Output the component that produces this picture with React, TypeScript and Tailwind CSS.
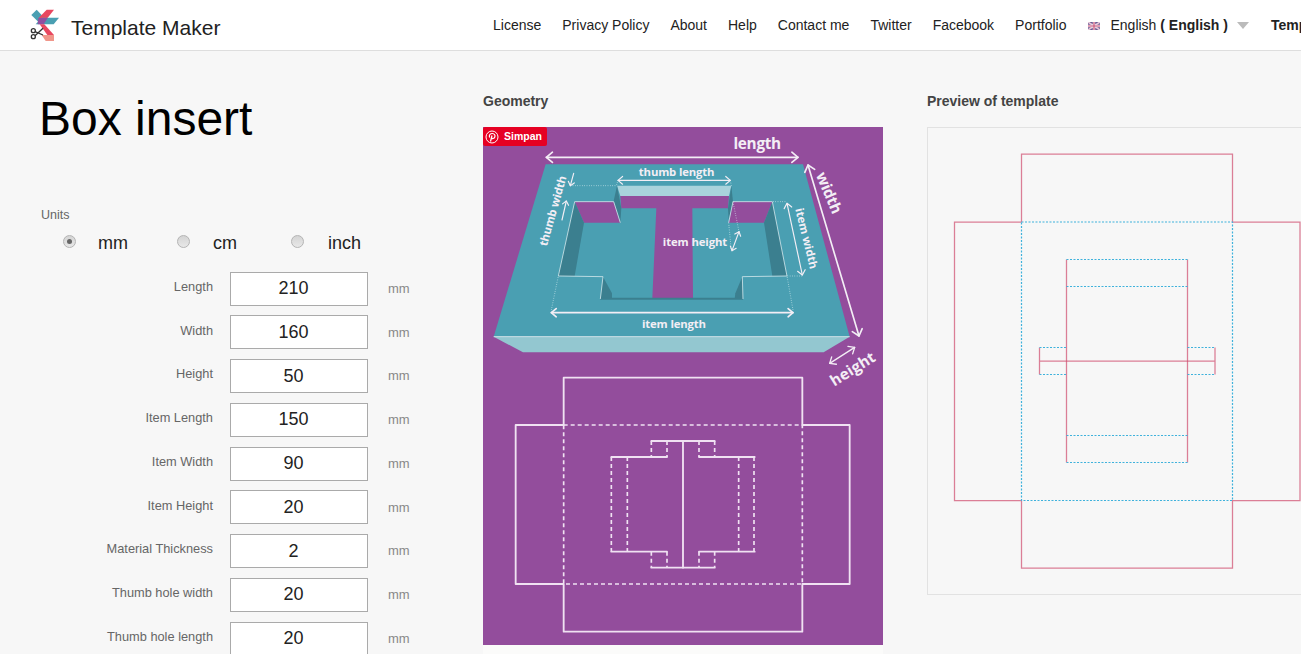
import React from "react";

const nav = ["License", "Privacy Policy", "About", "Help", "Contact me", "Twitter", "Facebook", "Portfolio"];
const fields: [string, string][] = [
  ["Length", "210"],
  ["Width", "160"],
  ["Height", "50"],
  ["Item Length", "150"],
  ["Item Width", "90"],
  ["Item Height", "20"],
  ["Material Thickness", "2"],
  ["Thumb hole width", "20"],
  ["Thumb hole length", "20"],
];

function Logo() {
  return (
    <svg width="30" height="33" viewBox="93 26 90 99" className="shrink-0">
      <polygon points="113,28 145,62 125,72 97,44" fill="#4a9fb2" />
      <polygon points="143,28 165,28 145,54 118,54" fill="#e8475f" />
      <polygon points="128,52 180,52 164,72 110,72" fill="#4a9fb2" />
      <polygon points="118,53 146,53 134,72 116,72" fill="#8f4fa0" />
      <polygon points="122,72 136,72 165,104 145,104" fill="#e8475f" />
      <polygon points="128,104 165,104 165,122 140,122" fill="#f0968a" />
      <g fill="none" stroke="#333" strokeWidth="4">
        <circle cx="103" cy="91" r="6" />
        <circle cx="103" cy="109" r="6" />
        <path d="M108 94 L132 104 M108 106 L132 84" />
      </g>
    </svg>
  );
}

function Flag() {
  return (
    <svg width="12" height="8" viewBox="0 0 12 8" className="shrink-0">
      <rect width="12" height="8" fill="#6a5a94" />
      <path d="M0 0 L12 8 M12 0 L0 8" stroke="#e8c8d8" strokeWidth="1.6" />
      <path d="M6 0 V8 M0 4 H12" stroke="#f4e4ea" strokeWidth="2.4" />
      <path d="M6 0 V8 M0 4 H12" stroke="#c8557a" strokeWidth="1.2" />
    </svg>
  );
}

function Radio({ on }: { on?: boolean }) {
  return (
    <span className="relative -top-[2px] flex size-[13px] items-center justify-center rounded-full border border-[#b4b4b4] bg-gradient-to-b from-[#d4d4d4] to-[#e8e8e8]">
      {on && <span className="size-[5px] rounded-full bg-[#666]" />}
    </span>
  );
}

function Head({ x, y, fx, fy, s }: { x: number; y: number; fx: number; fy: number; s: number }) {
  const a = Math.atan2(fy - y, fx - x);
  const l = 24 * s;
  const p1 = [x + l * Math.cos(a + 0.7), y + l * Math.sin(a + 0.7)];
  const p2 = [x + l * Math.cos(a - 0.7), y + l * Math.sin(a - 0.7)];
  return <polyline points={`${p1[0]},${p1[1]} ${x},${y} ${p2[0]},${p2[1]}`} fill="none" />;
}

function Arrow({ a, b, w = 4, s = 1, one }: { a: [number, number]; b: [number, number]; w?: number; s?: number; one?: boolean }) {
  return (
    <g stroke="#f3eef5" strokeWidth={w} strokeLinecap="round" strokeLinejoin="round">
      <line x1={a[0]} y1={a[1]} x2={b[0]} y2={b[1]} />
      <Head x={a[0]} y={a[1]} fx={b[0]} fy={b[1]} s={s} />
      {!one && <Head x={b[0]} y={b[1]} fx={a[0]} fy={a[1]} s={s} />}
    </g>
  );
}

function Label({ x, y, r = 0, size, len, children }: { x: number; y: number; r?: number; size: number; len: number; children: string }) {
  return (
    <text
      x={x}
      y={y}
      transform={r ? `rotate(${r} ${x} ${y})` : undefined}
      textAnchor="middle"
      dominantBaseline="central"
      fontFamily="'Open Sans', sans-serif"
      fontWeight="700"
      fontSize={size}
      fill="#f3eef5"
      textLength={len}
    >
      {children}
    </text>
  );
}

function Geometry() {
  const dot = { stroke: "#d8eef2", strokeWidth: 2.5, strokeDasharray: "2 5", fill: "none" };
  const cut = { stroke: "#f0e2f2", strokeWidth: 5.5, fill: "none", strokeLinecap: "round" as const, strokeLinejoin: "round" as const };
  const dash = { ...cut, strokeWidth: 5, strokeDasharray: "12 9", strokeLinecap: "butt" as const };
  return (
    <svg width="400" height="518" viewBox="0 0 400 518" className="block">
      <rect width="400" height="518" fill="#934d9c" />
      <g transform="translate(0 -7) scale(0.33333)">
        <polygon points="32,650 1100,650 1022,697 120,697" fill="#93c7d0" />
        <polygon points="188,133 960,133 1100,650 32,650" fill="#4a9fb2" />
        <line x1="32" y1="650" x2="1100" y2="650" stroke="#cfe6ea" strokeWidth="3" />
        <polygon points="402,197 745,197 738,228 412,228" fill="#a9d3dc" />
        <polygon points="412,228 738,228 735,265 628,265 630,535 508,535 520,265 415,265" fill="#934d9c" />
        <polygon points="275,245 392,245 412,308 303,308" fill="#934d9c" />
        <polygon points="750,245 868,245 843,308 737,308" fill="#934d9c" />
        <polygon points="275,245 303,308 275,468 226,468" fill="#3b7f8f" />
        <polygon points="868,245 912,468 868,468 843,308" fill="#3b7f8f" />
        <polygon points="392,243 402,197 415,265 412,308" fill="#3b7f8f" />
        <polygon points="745,197 750,245 737,300 735,265" fill="#3b7f8f" />
        <polygon points="360,470 387,520 387,537 352,537" fill="#3b7f8f" />
        <polygon points="778,470 780,537 755,537 757,520" fill="#3b7f8f" />
        <polygon points="352,533 780,533 780,539 352,539" fill="#3b7f8f" />
        <g stroke="#cfe6ea" strokeWidth="2.5" fill="none">
          <polyline points="392,245 275,245 226,468 360,470 352,537" />
          <polyline points="392,245 412,308" />
          <polyline points="750,245 868,245 912,468 778,470 780,537" />
          <polyline points="750,245 737,308" />
        </g>
        <g {...dot}>
          <polyline points="262,197 400,197 405,181" />
          <polyline points="745,197 742,181" />
          <polyline points="205,570 226,468" />
          <polyline points="930,570 912,468 958,468" />
          <polyline points="870,245 912,245" />
          <polyline points="750,245 768,335" />
          <polyline points="737,308 745,392" />
        </g>
        <Arrow a={[190, 112]} b={[945, 112]} w={5} />
        <Arrow a={[975, 135]} b={[1128, 648]} w={5} />
        <Arrow a={[405, 181]} b={[742, 181]} w={3.5} s={0.75} />
        <Arrow a={[262, 197]} b={[272, 160]} w={3.5} s={0.6} one />
        <Arrow a={[250, 243]} b={[237, 300]} w={3.5} s={0.6} one />
        <Arrow a={[912, 250]} b={[958, 465]} w={3.5} s={0.75} />
        <Arrow a={[768, 335]} b={[747, 392]} w={3.5} s={0.6} />
        <Arrow a={[205, 578]} b={[930, 578]} w={5} s={0.8} />
        <Arrow a={[1040, 730]} b={[1115, 682]} w={4} s={0.85} />
        <Label x={823} y={68} size={46} len={143}>length</Label>
        <Label x={1040} y={218} r={67} size={46} len={130}>width</Label>
        <Label x={581} y={155} size={34} len={227}>thumb length</Label>
        <Label x={208} y={272} r={-74} size={34} len={218}>thumb width</Label>
        <Label x={636} y={364} size={34} len={193}>item height</Label>
        <Label x={972} y={355} r={76} size={34} len={186}>item width</Label>
        <Label x={573} y={611} size={34} len={192}>item length</Label>
        <Label x={1108} y={745} r={-32} size={46} len={150}>height</Label>
      </g>
      <g transform="translate(0 238) scale(0.33333)">
        <polyline {...cut} points="242,180 242,38 958,38 958,180 1100,180 1100,657 958,657 958,800 242,800 242,657 98,657 98,180 242,180" />
        <rect {...dash} x="242" y="180" width="716" height="477" />
        <g {...cut}>
          <line x1="600" y1="228" x2="600" y2="608" />
          <polyline points="505,228 695,228" />
          <polyline points="385,276 552,276" />
          <polyline points="648,276 815,276" />
          <polyline points="385,560 552,560" />
          <polyline points="648,560 815,560" />
          <polyline points="505,608 695,608" />
        </g>
        <g {...dash}>
          <path d="M385 276 V560 M433 276 V560 M767 276 V560 M813 276 V560" />
          <path d="M505 228 V276 M552 228 V276 M648 228 V276 M695 228 V276" />
          <path d="M505 560 V608 M552 560 V608 M648 560 V608 M695 560 V608" />
        </g>
      </g>
    </svg>
  );
}

function Preview() {
  const red = { stroke: "#cf4a6c", strokeOpacity: 0.7, strokeWidth: 1.25, fill: "none" };
  const blue = { stroke: "#3fb2dc", strokeWidth: 1.2, strokeDasharray: "2 1.5", fill: "none" };
  return (
    <svg width="374" height="466" viewBox="928 128 374 466" className="block">
      <g {...red}>
        <polyline points="1021.5,222 1021.5,154 1232.5,154 1232.5,222 1300,222 1300,500.5 1232.5,500.5 1232.5,568 1021.5,568 1021.5,500.5 954.5,500.5 954.5,222 1021.5,222" />
        <path d="M1066.5 259.5 V462.5 M1187.5 259.5 V462.5" />
        <path d="M1039.5 347.5 V374.5 M1215 347.5 V374.5 M1039.5 361 H1215" />
      </g>
      <g {...blue}>
        <rect x="1021.5" y="222" width="211" height="278.5" />
        <path d="M1066.5 259.5 H1187.5 M1066.5 286.5 H1187.5 M1066.5 435.5 H1187.5 M1066.5 462.5 H1187.5" />
        <path d="M1039.5 347.5 H1066.5 M1187.5 347.5 H1215 M1039.5 374.5 H1066.5 M1187.5 374.5 H1215" />
      </g>
    </svg>
  );
}

export default function App() {
  return (
    <div className="h-[654px] w-[1301px] overflow-hidden bg-[#f7f7f7] [font-family:'Liberation_Sans',Arial,sans-serif]">
      <header className="flex h-[51px] items-center overflow-hidden whitespace-nowrap border-b border-[#dedede] bg-white">
        <div className="flex w-[493px] shrink-0 items-center gap-[11px] pl-[30px]">
          <Logo />
          <span className="pt-[5px] text-[21px] text-[#222]">Template Maker</span>
        </div>
        <nav className="flex items-center gap-[21px] pt-[1px] text-[14px] text-[#222]">
          {nav.map((n) => (
            <span key={n}>{n}</span>
          ))}
          <span className="flex items-center">
            <span className="ml-[1px]"><Flag /></span>
            <span className="ml-[10px]">English <b>( English )</b></span>
            <span className="ml-[9px] h-0 w-0 border-x-[6px] border-t-[7px] border-x-transparent border-t-[#bbb]" />
            <b className="ml-[22px]">Templates</b>
          </span>
        </nav>
      </header>
      <main className="flex">
        <section className="w-[483px] shrink-0 pl-[40px]">
          <h1 className="mt-[41px] -ml-[1px] text-[48px] leading-[54px] text-black">Box insert</h1>
          <div className="mt-[61px] pl-[1px] text-[12.5px] leading-[16px] text-[#666]">Units</div>
          <div className="mt-[8px] flex h-[24px] items-center pt-[1px] text-[18px] text-[#222]">
            <div className="flex w-[115px] items-center pl-[23px]">
              <Radio on />
              <span className="ml-[22px]">mm</span>
            </div>
            <div className="flex w-[114px] items-center">
              <span className="ml-[22px]"><Radio /></span>
              <span className="ml-[23px]">cm</span>
            </div>
            <div className="flex items-center">
              <span className="ml-[22px]"><Radio /></span>
              <span className="ml-[24px]">inch</span>
            </div>
          </div>
          <div className="mt-[16.5px]">
            {fields.map(([label, value]) => (
              <div key={label} className="mb-[9.75px] flex h-[34px] items-center">
                <label className="w-[173px] pb-[4px] text-right text-[12.8px] text-[#666]">{label}</label>
                <input
                  defaultValue={value}
                  readOnly
                  className="ml-[17px] h-[34px] w-[138px] border border-[#aaa] bg-white pr-[11px] text-center text-[18px] text-[#222] outline-none"
                />
                <span className="ml-[20px] text-[13px] text-[#888]">mm</span>
              </div>
            ))}
          </div>
        </section>
        <section className="w-[444px] shrink-0 pt-[42px]">
          <h2 className="mb-[18px] text-[14px] leading-[16px] font-bold text-[#444]">Geometry</h2>
          <div className="relative w-[400px]">
            <Geometry />
            <div className="absolute left-0 top-0 flex h-[19px] w-[64px] items-center gap-[5px] rounded-[2px] bg-[#e60023] pl-[2px] text-[10.5px] font-bold text-white">
              <svg width="14" height="14" viewBox="0 0 14 14" fill="none" stroke="white">
                <circle cx="7" cy="7" r="6" strokeWidth="1" />
                <path d="M5.5 11.5 L7 5.5 M4.6 7.5 C3.6 4.8 5.6 3.4 7.4 3.5 C9.6 3.6 10.4 5.4 9.8 7 C9.2 8.8 7.2 9 6.4 7.8" strokeWidth="1.2" />
              </svg>
              <span className="pt-[1px]">Simpan</span>
            </div>
          </div>
          <div className="h-[10px] w-[400px] bg-[#fbfbfa]" />
        </section>
        <section className="shrink-0 pt-[42px]">
          <h2 className="mb-[18px] text-[14px] leading-[16px] font-bold text-[#444]">Preview of template</h2>
          <div className="w-[374px] border-y border-l border-[#e2e2e2]">
            <Preview />
          </div>
        </section>
      </main>
    </div>
  );
}
